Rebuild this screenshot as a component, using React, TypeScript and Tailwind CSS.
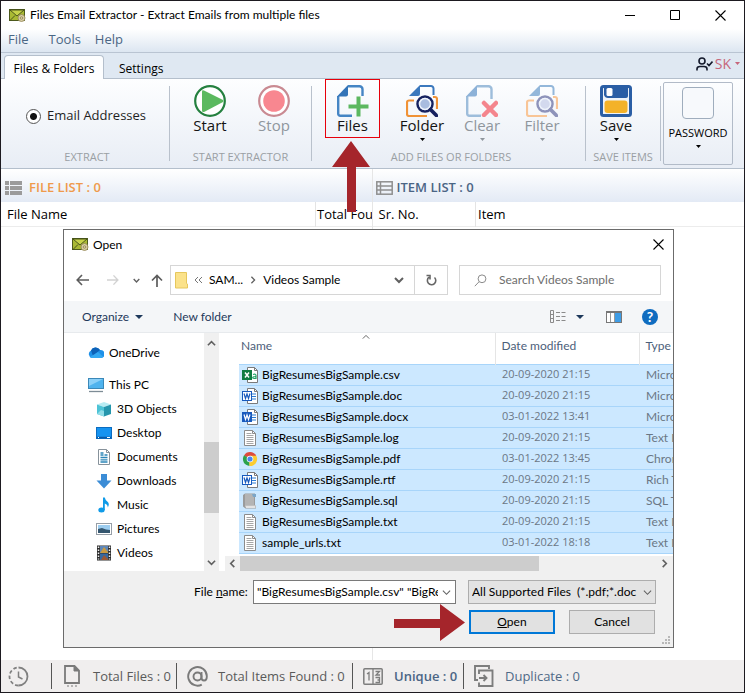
import React from "react";

const red = "#a5252b";

/* ---------- icons ---------- */

function MailIcon() {
  return (
    <svg width="17" height="13" viewBox="0 0 17 13" aria-hidden="true">
      <rect x="0.5" y="0.5" width="15" height="11" fill="#a9b933" stroke="#4d5a1c" />
      <path d="M1 1l7 6 7-6z" fill="#c6d24a" stroke="#3f4b18" strokeWidth="0.9" />
      <path d="M1 11.5l5-5M15 11l-5-4.500" stroke="#3f4b18" strokeWidth="0.9" />
      <circle cx="12.500" cy="9" r="3.500" fill="#d9cfa6" stroke="#8f8350" strokeWidth="0.8" />
      <circle cx="12.500" cy="9" r="1.300" fill="none" stroke="#8f8350" strokeWidth="0.8" />
    </svg>
  );
}

function StartIcon() {
  return (
    <svg width="32" height="32" viewBox="0 0 32 32" aria-hidden="true">
      <circle cx="16" cy="16" r="14.800" fill="#fff" stroke="#24803f" strokeWidth="2.200" />
      <path d="M8 6.500Q8 4.500 10 5.500L29 15Q30 16 29 17L11 26.500Q8 28 8 25.500z" fill="#5bb95f" />
    </svg>
  );
}

function StopIcon() {
  return (
    <svg width="32" height="32" viewBox="0 0 32 32" aria-hidden="true">
      <circle cx="16" cy="16" r="14.800" fill="#fff" stroke="#c98a92" strokeWidth="2.200" />
      <circle cx="16" cy="16" r="10.800" fill="#f88790" />
    </svg>
  );
}

function FilesIcon() {
  return (
    <svg width="32" height="32" viewBox="0 0 32 32" aria-hidden="true">
      <path d="M11 1.200h11.500a3 3 0 0 1 3 3V11M15 30.800H3.200a2 2 0 0 1-2-2V11" fill="none" stroke="#4585c4" strokeWidth="2.400" />
      <path d="M0 11.500L11 0v9.500a2 2 0 0 1-2 2z" fill="#3374b8" />
      <path d="M21.500 11.500v20M11.500 21.500h20" stroke="#5cb860" strokeWidth="4" />
    </svg>
  );
}

function FolderSearchIcon({ faded = false }: { faded?: boolean }) {
  const blue = faded ? "#93b7da" : "#3a78bd";
  const orange = faded ? "#f8c597" : "#f09236";
  const navy = faded ? "#8e93ba" : "#17225f";
  return (
    <svg width="32" height="32" viewBox="0 0 32 32" aria-hidden="true">
      <path d="M14 1h11a2.500 2.500 0 0 1 2.500 2.500V10" fill="none" stroke={blue} strokeWidth="2" />
      <path d="M3 11L14 0v9a2 2 0 0 1-2 2z" fill={blue} />
      <path d="M8 15.500H3a2 2 0 0 0-2 2V29a2 2 0 0 0 2 2h18M27 12h2a2 2 0 0 1 2 2v10" fill="none" stroke={orange} strokeWidth="2.200" />
      <circle cx="19" cy="19" r="7.500" fill={faded ? "#d3d9ee" : "#a9bcdf"} stroke={navy} strokeWidth="2.500" />
      <circle cx="19" cy="19" r="5.500" fill="none" stroke="#eef3fb" strokeWidth="1.500" />
      <path d="M24.500 24.500l6 6" stroke={navy} strokeWidth="3.800" strokeLinecap="round" />
    </svg>
  );
}

function ClearIcon() {
  return (
    <svg width="32" height="32" viewBox="0 0 32 32" aria-hidden="true">
      <path d="M11 1.200h11.500a3 3 0 0 1 3 3V14M15 30.800H3.200a2 2 0 0 1-2-2V11" fill="none" stroke="#9dbddb" strokeWidth="2.400" />
      <path d="M0 11.500L11 0v9.500a2 2 0 0 1-2 2z" fill="#8db2d8" />
      <path d="M18 18l12 12M30 18L18 30" stroke="#f4858d" strokeWidth="4.500" strokeLinecap="round" />
    </svg>
  );
}

function SaveIcon() {
  return (
    <svg width="32" height="32" viewBox="0 0 32 32" aria-hidden="true">
      <rect x="1.500" y="1.500" width="29" height="29" rx="2" fill="#eef3f8" stroke="#2a5ea5" strokeWidth="3" />
      <path d="M4 1h24v10q0 2-2 2H8q-3 0-4-3z" fill="#2a5ea5" />
      <rect x="6.500" y="3" width="6" height="8" rx="1.500" fill="#fff" />
      <rect x="4.500" y="15.500" width="23" height="12.500" rx="3" fill="#f3b229" />
    </svg>
  );
}

function UserIcon() {
  return (
    <svg width="17" height="14" viewBox="0 0 17 14" fill="none" stroke="#141a2c" strokeWidth="1.600" aria-hidden="true">
      <circle cx="6" cy="4" r="3" />
      <path d="M1 13.500V12q0-2.500 3-2.500h4q3 0 3 2.500v1.500M11 6.500l2 2 3.500-4" />
    </svg>
  );
}

function FileListIcon() {
  return (
    <svg width="17" height="14" viewBox="0 0 17 14" fill="#9b9b9b" aria-hidden="true">
      <path d="M0 0h4v4H0zM5 0h12v4H5zM0 5h4v4H0zM5 5h12v4H5zM0 10h4v4H0zM5 10h12v4H5z" />
    </svg>
  );
}

function ItemListIcon() {
  return (
    <svg width="17" height="14" viewBox="0 0 17 14" fill="none" stroke="#8f8f8f" strokeWidth="1.500" aria-hidden="true">
      <rect x="0.800" y="0.800" width="15.400" height="12.400" />
      <path d="M4.500 1v12M1 5h15M1 9h15" />
    </svg>
  );
}

function Chevron({ dir, size = 9, color = "#606060", width = 1.8 }: { dir: "up" | "down" | "left" | "right"; size?: number; color?: string; width?: number }) {
  const d = {
    up: "M1 7l4-4 4 4",
    down: "M1 3l4 4 4-4",
    left: "M7 1L3 5l4 4",
    right: "M3 1l4 4-4 4",
  }[dir];
  return (
    <svg width={size} height={size} viewBox="0 0 10 10" fill="none" stroke={color} strokeWidth={width} aria-hidden="true">
      <path d={d} />
    </svg>
  );
}

function Caret({ color = "#000", w = 5 }: { color?: string; w?: number }) {
  return (
    <svg width={w} height={Math.ceil(w / 2)} viewBox="0 0 8 4" preserveAspectRatio="none" aria-hidden="true">
      <path d="M0 0h8L4 4z" fill={color} />
    </svg>
  );
}

function CloseIcon({ size = 11 }: { size?: number }) {
  return (
    <svg width={size} height={size} viewBox="0 0 11 11" stroke="#000" strokeWidth="1.100" aria-hidden="true">
      <path d="M0.500 0.500l10 10M10.500 0.500l-10 10" />
    </svg>
  );
}

function PlaceIcon({ name }: { name: string }) {
  const art: Record<string, React.ReactNode> = {
    OneDrive: (
      <>
        <path d="M4 13a4 4 0 0 1-1-7.500A5 5 0 0 1 12 5a3.800 3.800 0 0 1 1 8z" fill="#1e90e8" />
        <path d="M3 5.500A5 5 0 0 1 12 5L5 11z" fill="#0d62b8" />
        <path d="M2 12l8-5 5 4.500Q14.500 13 13 13H4q-1.500 0-2-1z" fill="#33a8f2" />
      </>
    ),
    "This PC": (
      <>
        <rect x="0.500" y="1.500" width="15" height="10" fill="#4fb3ee" stroke="#3b88b8" />
        <path d="M1 2h14L1 9z" fill="#8bd0f8" />
        <path d="M1 14.500h14" stroke="#7d8c96" strokeWidth="1.300" />
      </>
    ),
    "3D Objects": (
      <>
        <path d="M1 3.500L8 1l7 2.500L8 6z" fill="#b8ecf3" />
        <path d="M1 3.500L8 6v9.500L1 13z" fill="#4dc3d6" />
        <path d="M15 3.500L8 6v9.500L15 13z" fill="#2596ad" />
        <path d="M1 13l4-4 3 1v5.500z" fill="#90dde8" />
      </>
    ),
    Desktop: (
      <>
        <rect x="0.500" y="2.500" width="15" height="11" fill="#1693f0" stroke="#0b6cc0" />
        <path d="M1 12.500h14" stroke="#0a58a6" strokeWidth="1.500" />
        <path d="M2 12.500h1M11 12.500h3" stroke="#fff" />
      </>
    ),
    Documents: (
      <>
        <path d="M2.500 0.500h8l3 3v12h-11z" fill="#fff" stroke="#87929b" />
        <path d="M10.500 0.500v3h3" fill="none" stroke="#87929b" />
        <path d="M4.500 4h3M4.500 6h3M4.500 8.500h7M4.500 10.800h7M4.500 13h7M8.500 6h3" stroke="#2c86b8" strokeWidth="1.300" />
      </>
    ),
    Downloads: <path d="M5 1h6v6.500h4.500L8 15.500 0.500 7.500H5z" fill="#3b8cd6" />,
    Music: (
      <>
        <ellipse cx="5.500" cy="13" rx="3.200" ry="2.500" fill="#109be8" />
        <path d="M7 0.500h1.800q0.500 3 3 4.500 2 2 0 5.500 0-3-3-4v6.500H7z" fill="#109be8" />
      </>
    ),
    Pictures: (
      <>
        <rect x="0.500" y="2.500" width="15" height="11" fill="#fff" stroke="#969ea6" />
        <rect x="2" y="4" width="12" height="8" fill="#9ccdf0" />
        <path d="M2 8l4-1 4 1.500 4 .5v3H2z" fill="#34566f" />
      </>
    ),
    Videos: (
      <>
        <rect x="1" y="0.500" width="14" height="15" fill="#2c2c2c" />
        <rect x="4" y="1" width="8" height="7" fill="#5d86b8" />
        <rect x="4" y="8.500" width="8" height="6.500" fill="#3668a0" />
        <path d="M4 8l4-6 4 5v1z" fill="#c89a42" />
        <path d="M5 15l3-5 4 4v1z" fill="#9a5633" />
        <path d="M2.500 1.500v13M13.500 1.500v13" stroke="#f1f1f1" strokeWidth="1.500" strokeDasharray="1.500 1.500" />
      </>
    ),
  };
  return (
    <svg width="16" height="16" viewBox="0 0 16 16" className="shrink-0" aria-hidden="true">
      {art[name]}
    </svg>
  );
}

type Kind = "csv" | "doc" | "docx" | "text" | "chrome" | "sql";

function FileIcon({ kind }: { kind: Kind }) {
  if (kind === "chrome") {
    return (
      <svg width="16" height="16" viewBox="0 0 16 16" aria-hidden="true">
        <path d="M8 8L2 4.500A7 7 0 0 1 14.200 4.800z" fill="#dd4b3e" />
        <path d="M8 8L2 4.300A7 7 0 0 0 7.500 15z" fill="#2ba24c" />
        <path d="M8 8h-1l.5 7A7 7 0 0 0 14.300 4.800H8z" fill="#fbcc30" />
        <circle cx="8" cy="8" r="3.300" fill="#fff" />
        <circle cx="8" cy="8" r="2.600" fill="#4a87ee" />
      </svg>
    );
  }
  if (kind === "sql") {
    return (
      <svg width="16" height="16" viewBox="0 0 16 16" aria-hidden="true">
        <path d="M1 2l2-1.500h10V12l1 1v2.500H3.500L1 13.500z" fill="#9b9b9b" />
        <path d="M3 1h9v11H3z" fill="#b4b4b4" />
        <path d="M3 12.500h10.500V15H4z" fill="#e3e3e3" />
        <path d="M10 1h4v3h-3z" fill="#7ba6c8" />
      </svg>
    );
  }
  if (kind === "text") {
    return (
      <svg width="16" height="16" viewBox="0 0 16 16" aria-hidden="true">
        <path d="M2.500 0.500h8l3 3v12h-11z" fill="#fff" stroke="#8b8b8b" />
        <path d="M10.500 0.500v3h3" fill="none" stroke="#8b8b8b" />
        <path d="M4.500 3.500h5M4.500 5.500h7M4.500 7.500h7M4.500 9.500h7M4.500 11.500h7M4.500 13.500h7" stroke="#9c9c9c" strokeWidth="0.900" />
      </svg>
    );
  }
  const main = kind === "csv" ? "#107c41" : "#185abd";
  const light = kind === "doc";
  return (
    <svg width="17" height="16" viewBox="0 0 17 16" aria-hidden="true">
      <path d="M5.500 0.500h7l3 3v12h-10z" fill="#fff" stroke="#7a7a7a" />
      <path d="M12.500 0.500v3h3" fill="none" stroke="#7a7a7a" />
      {kind === "csv" ? (
        <path d="M11 7.500q3-1 3 1v3h-2q-1.500 0-1.200-1.200.3-.8 3-.8" fill="none" stroke="#21a366" strokeWidth="1.200" />
      ) : (
        <path d="M10 6h4M10 8.500h4M10 11h4" stroke="#2b7cd3" strokeWidth="1.200" />
      )}
      <rect x="0.500" y="3.500" width="9" height="9" fill={light ? "#fff" : main} stroke={main} />
      {kind === "csv" ? (
        <path d="M3 5.500l4 5M7 5.500l-4 5" stroke="#fff" strokeWidth="1.500" />
      ) : (
        <path d="M2 5.500l1.500 5L5 6l1.500 4.500L8 5.500" fill="none" stroke={light ? main : "#fff"} strokeWidth="1.200" />
      )}
    </svg>
  );
}

/* ---------- data ---------- */

const places = ["3D Objects", "Desktop", "Documents", "Downloads", "Music", "Pictures", "Videos"];

const files: { name: string; date: string; type: string; kind: Kind }[] = [
  { name: "BigResumesBigSample.csv", date: "20-09-2020 21:15", type: "Microsoft", kind: "csv" },
  { name: "BigResumesBigSample.doc", date: "20-09-2020 21:15", type: "Microsoft", kind: "doc" },
  { name: "BigResumesBigSample.docx", date: "03-01-2022 13:41", type: "Microsoft", kind: "docx" },
  { name: "BigResumesBigSample.log", date: "20-09-2020 21:15", type: "Text Doc", kind: "text" },
  { name: "BigResumesBigSample.pdf", date: "03-01-2022 13:45", type: "Chrome", kind: "chrome" },
  { name: "BigResumesBigSample.rtf", date: "20-09-2020 21:15", type: "Rich Text", kind: "doc" },
  { name: "BigResumesBigSample.sql", date: "20-09-2020 21:15", type: "SQL Text", kind: "sql" },
  { name: "BigResumesBigSample.txt", date: "20-09-2020 21:15", type: "Text Doc", kind: "text" },
  { name: "sample_urls.txt", date: "03-01-2022 18:18", type: "Text Doc", kind: "text" },
];

/* ---------- ribbon ---------- */

function RibbonButton({ label, icon, caret, disabled }: { label: string; icon: React.ReactNode; caret?: boolean; disabled?: boolean }) {
  return (
    <button type="button" disabled={disabled} className="flex h-[62px] w-[60px] flex-col items-center text-[15px] text-[#141414] disabled:text-[#8f969d]">
      {icon}
      <span className="leading-[17px]">{label}</span>
      {caret && (
        <span className="pt-1">
          <Caret color={disabled ? "#8f969d" : "#000"} />
        </span>
      )}
    </button>
  );
}

function Group({ title, className, children }: { title: string; className: string; children: React.ReactNode }) {
  return (
    <section className={"flex flex-col " + className}>
      <div className="flex h-[70px] pt-1.5">{children}</div>
      <h2 className="whitespace-nowrap text-center text-[11px] leading-4 text-[#9a9fa4]">{title}</h2>
    </section>
  );
}

function Rule() {
  return <div className="my-[7px] w-px shrink-0 bg-[#b9c1cc]" />;
}

function Ribbon() {
  return (
    <div className="flex h-[91px] border-y border-[#b4bfcc] bg-linear-to-b from-[#fdfeff] to-[#e8edf5]">
      <Group title="EXTRACT" className="w-[168px] pl-1">
        <label className="flex w-full items-center justify-center gap-1.5 whitespace-nowrap pb-0.5 pr-0.5 text-[13px] text-[#1f1f1f]">
          <input
            type="radio"
            name="extract"
            defaultChecked
            className="size-[15px] appearance-none rounded-full border border-[#555] bg-white checked:bg-[radial-gradient(circle,#111_0_3px,#fff_4px)]"
          />
          Email Addresses
        </label>
      </Group>
      <Rule />
      <Group title="START EXTRACTOR" className="w-[141px] px-2">
        <div className="flex gap-1 pl-0.5">
          <RibbonButton label="Start" icon={<StartIcon />} />
          <RibbonButton label="Stop" icon={<StopIcon />} disabled />
        </div>
      </Group>
      <Rule />
      <Group title="ADD FILES OR FOLDERS" className="w-[273px] pl-[13px] pr-2">
        <div className="-mt-1.5 mr-3 flex h-[59px] w-[55px] shrink-0 justify-center border border-red-600 pt-[5px]">
          <RibbonButton label="Files" icon={<FilesIcon />} />
        </div>
        <RibbonButton label="Folder" icon={<FolderSearchIcon />} caret />
        <RibbonButton label="Clear" icon={<ClearIcon />} caret disabled />
        <RibbonButton label="Filter" icon={<FolderSearchIcon faded />} caret disabled />
      </Group>
      <Rule />
      <Group title="SAVE ITEMS" className="w-[74px]">
        <RibbonButton label="Save" icon={<SaveIcon />} caret />
      </Group>
      <Rule />
      <button type="button" className="my-[3px] ml-0.5 flex w-[70px] flex-col items-center rounded-xs border border-[#b2bbc8] pt-1 text-[11px] text-black">
        <span className="size-8 rounded-sm border border-[#9fadbd] bg-[#f7f9fc]" />
        <span className="pt-1.5 leading-4">PASSWORD</span>
        <span className="pt-1">
          <Caret />
        </span>
      </button>
    </div>
  );
}

/* ---------- dialog ---------- */

function OpenDialog() {
  return (
    <div role="dialog" aria-label="Open" className="absolute left-[62px] top-[228px] w-[611px] border border-[#6b6b6b] bg-white font-['Lato','Noto_Sans',sans-serif] text-xs text-black">
      <div className="flex h-[29px] items-center px-2">
        <MailIcon />
        <span className="pl-1">Open</span>
        <button type="button" aria-label="Close" className="ml-auto mr-px">
          <CloseIcon />
        </button>
      </div>

      <div className="flex h-[42px] items-center pl-3 pr-3">
        <button type="button" aria-label="Back">
          <svg width="13" height="12" viewBox="0 0 13 12" fill="none" stroke="#5c5c5c" strokeWidth="1.600"><path d="M13 6H1.500M6 1L1.200 6 6 11" /></svg>
        </button>
        <button type="button" aria-label="Forward" disabled className="ml-[18px]">
          <svg width="12" height="12" viewBox="0 0 13 12" fill="none" stroke="#d2d2d2" strokeWidth="1.500"><path d="M0 6h11.500M7 1l4.800 5L7 11" /></svg>
        </button>
        <button type="button" aria-label="Recent locations" className="ml-[14px]">
          <Chevron dir="down" size={7} width={2} />
        </button>
        <button type="button" aria-label="Up" className="ml-[11px]">
          <svg width="12" height="13" viewBox="0 0 12 13" fill="none" stroke="#5c5c5c" strokeWidth="1.700"><path d="M6 13V1.500M1 6.500l5-5 5 5" /></svg>
        </button>
        <div className="ml-[7px] flex h-[30px] w-[278px] items-center border border-[#d6d6d6]">
          <svg width="13" height="17" viewBox="0 0 13 17" className="ml-1" aria-hidden="true">
            <path d="M0.500 0.500h11v11l1 .500v4H.5z" fill="#fbe28a" stroke="#e6c75c" />
          </svg>
          <svg width="9" height="8" viewBox="0 0 9 8" className="ml-1.5" fill="none" stroke="#777" aria-hidden="true"><path d="M4 1L1 4l3 3M8 1L5 4l3 3" /></svg>
          <span className="ml-1.5">SAM...</span>
          <span className="ml-1.5"><Chevron dir="right" size={8} width={1.6} /></span>
          <span className="ml-1.5">Videos Sample</span>
          <button type="button" aria-label="Previous locations" className="ml-auto mr-[10px]">
            <Chevron dir="down" size={10} width={2} />
          </button>
          <button type="button" aria-label="Refresh" className="flex h-full w-[33px] items-center justify-center border-l border-[#d6d6d6]">
            <svg width="11" height="12" viewBox="0 0 11 12" fill="none" stroke="#666" strokeWidth="1.600"><path d="M8.500 3.500A4.200 4.200 0 1 1 3 3.200M0.500 1.500H4v4" /></svg>
          </button>
        </div>
        <label className="ml-[11px] flex h-[30px] flex-1 items-center border border-[#d6d6d6] pl-3.5">
          <svg width="13" height="13" viewBox="0 0 13 13" fill="none" stroke="#8b8b8b" className="shrink-0" aria-hidden="true"><circle cx="8" cy="4.800" r="3.900" /><path d="M5 7.800L0.800 12.200" /></svg>
          <input type="text" aria-label="Search Videos Sample" placeholder="Search Videos Sample" className="ml-3 w-full min-w-0 outline-none placeholder:text-[#6d6d6d]" />
        </label>
      </div>

      <div className="flex h-[32px] items-center border-b border-[#e7eaed] bg-[#f4f6f8] pl-[18px] pr-[17px] text-[#1e395b]">
        <button type="button" className="flex items-center gap-1.5">
          Organize <Caret color="#1e395b" w={8} />
        </button>
        <button type="button" className="ml-[30px]">New folder</button>
        <button type="button" aria-label="Change view" className="ml-auto">
          <svg width="16" height="13" viewBox="0 0 16 13" fill="none" stroke="#8a8a8a" aria-hidden="true">
            <path d="M.5.5h3v12h-3zM.5 4.500h3M.5 8.500h3" />
            <path d="M6 2.500h10M6 6.500h10M6 10.500h10" strokeDasharray="4 1.500" />
          </svg>
        </button>
        <button type="button" aria-label="View options" className="ml-[10px] mr-[22px]"><Caret color="#1e395b" w={8} /></button>
        <button type="button" aria-label="Preview pane">
          <svg width="16" height="12" viewBox="0 0 16 12" aria-hidden="true"><rect x=".5" y=".5" width="15" height="11" fill="#fff" stroke="#777" /><path d="M1 1.500h14" stroke="#777" /><path d="M9 2h6v9H9z" fill="#3f9de6" /><path d="M4.500 2v9M8.500 2v9" stroke="#999" /></svg>
        </button>
        <button type="button" aria-label="Help" className="-mr-0.5 ml-5 flex size-4 items-center justify-center rounded-full bg-[#0f6cc0] text-sm font-bold leading-4 text-white">?</button>
      </div>

      <div className="flex h-[238px]">
        <nav className="w-[140px] pt-2">
          <a href="#onedrive" className="flex h-6 items-center gap-[5px] pl-6"><PlaceIcon name="OneDrive" />OneDrive</a>
          <a href="#pc" className="mt-2 flex h-6 items-center gap-[5px] pl-6"><PlaceIcon name="This PC" />This PC</a>
          {places.map((p) => (
            <a key={p} href="#place" className="flex h-6 items-center gap-[5px] pl-8"><PlaceIcon name={p} />{p}</a>
          ))}
        </nav>
        <div className="flex w-[15px] flex-col items-center bg-[#f0f0f0]">
          <span className="flex h-5 items-center"><Chevron dir="up" /></span>
          <span className="mt-[89px] h-[71px] w-full bg-[#cdcdcd]" />
          <span className="mt-auto flex h-[18px] items-center"><Chevron dir="down" /></span>
        </div>
        <div className="ml-1.5 flex min-w-0 flex-1 flex-col">
          <div className="relative overflow-hidden pl-[14px]">
            <span className="absolute left-[137px] top-0 flex"><Chevron dir="up" size={8} width={1.2} /></span>
            <table className="w-[460px] table-fixed border-collapse text-left">
              <thead>
                <tr className="h-[31px] text-[#4c607a]">
                  <th className="w-[256px] pb-1 pl-0.5 font-normal">Name</th>
                  <th className="w-[144px] border-l border-[#e5e5e5] pb-1 pl-1.5 font-normal">Date modified</th>
                  <th className="border-l border-[#e5e5e5] pb-1 pl-1.5 font-normal">Type</th>
                </tr>
              </thead>
              <tbody className="bg-[#cce8ff]">
                {files.map((f) => (
                  <tr key={f.name} className="h-[21px] border-y border-[#a8d5fa] text-[#6b7785]">
                    <td className="p-0 text-black">
                      <span className="flex items-center pl-[3px]">
                        <span className="flex w-5"><FileIcon kind={f.kind} /></span>
                        {f.name}
                      </span>
                    </td>
                    <td className="py-0 pl-[7px] font-['Open_Sans','Noto_Sans',sans-serif] text-[11px]">{f.date}</td>
                    <td className="whitespace-nowrap py-0 pl-[7px]">{f.type}</td>
                  </tr>
                ))}
              </tbody>
            </table>
          </div>
          <div className="mt-auto flex h-[15px] items-center bg-[#f0f0f0]">
            <span className="flex w-[15px] justify-center"><Chevron dir="left" /></span>
            <span className="h-full w-[299px] bg-[#cdcdcd]" />
            <span className="ml-auto mr-1 flex"><Chevron dir="right" /></span>
          </div>
        </div>
      </div>

      <div className="relative bg-[#f0f0f0] pb-[13px] pl-[130px] pr-[17px] pt-[9px]">
        <div className="flex items-center">
          <label htmlFor="file-name" className="w-[59px] whitespace-nowrap">File <u>n</u>ame:</label>
          <div className="flex h-6 w-[203px] items-center border border-[#7a7a7a] bg-white">
            <input id="file-name" type="text" defaultValue={'"BigResumesBigSample.csv" "BigResumesBigSample.doc"'} className="ml-[3px] min-w-0 flex-1 outline-none" />
            <button type="button" aria-label="Show file names" className="px-1"><Chevron dir="down" width={1.2} /></button>
          </div>
          <div className="relative ml-3 h-6 flex-1">
            <select aria-label="File type" className="h-full w-full appearance-none border border-[#adadad] bg-[#e3e3e3] pl-[3px] pr-4">
              <option>{"All Supported Files\u00a0 (*.pdf;*.doc"}</option>
            </select>
            <span className="pointer-events-none absolute right-1 top-2"><Chevron dir="down" width={1.2} /></span>
          </div>
        </div>
        <div className="mt-1.5 flex justify-end gap-3.5 pr-px">
          <button type="button" className="h-6 w-[86px] border-2 border-[#0078d7] bg-[#e1e1e1]"><u>O</u>pen</button>
          <button type="button" className="h-6 w-[86px] border border-[#adadad] bg-[#e1e1e1]">Cancel</button>
        </div>
        <svg width="9" height="9" viewBox="0 0 9 9" className="absolute bottom-0.5 right-0.5" fill="#b8b8b8" aria-hidden="true">
          <path d="M6 0h2v2H6zM3 3h2v2H3zM6 3h2v2H6zM0 6h2v2H0zM3 6h2v2H3zM6 6h2v2H6z" />
        </svg>
      </div>
    </div>
  );
}

/* ---------- status bar ---------- */

function StatusBar() {
  return (
    <footer className="flex h-8 items-center bg-[#f0eeee] text-[13px] text-[#5a5a5a]">
      <div className="flex w-[50px] pl-[7px]">
        <svg width="21" height="21" viewBox="0 0 21 21" fill="none" stroke="#808080" strokeWidth="1.800" aria-hidden="true">
          <path d="M10.500 1.500a9 9 0 0 1 0 18" />
          <path d="M10.500 19.500a9 9 0 0 1 0-18" strokeDasharray="3.500 2.200" />
          <path d="M10.500 5.500v5.500l4 2" strokeWidth="1.500" />
        </svg>
      </div>
      <div className="flex h-[26px] w-[125px] items-center whitespace-nowrap border-l border-[#555] pl-3">
        <svg width="16" height="22" viewBox="0 0 16 22" fill="none" stroke="#7a7a7a" strokeWidth="1.800" aria-hidden="true">
          <path d="M1 1h9.500L15 5.500V18H1z" /><path d="M10 1v5h5z" fill="#7a7a7a" strokeWidth="1" /><path d="M3 21h10" strokeDasharray="2 2" strokeWidth="1.200" />
        </svg>
        <span className="ml-[13px] pt-0.5">Total Files : 0</span>
      </div>
      <div className="flex h-[26px] w-[176px] items-center whitespace-nowrap border-l border-[#555] pl-2.5">
        <svg width="21" height="21" viewBox="0 0 21 21" fill="none" stroke="#7a7a7a" strokeWidth="1.900" aria-hidden="true">
          <circle cx="10.500" cy="10.500" r="4" /><path d="M14.500 6v5.500q0 3 2.500 3 3 0 2.800-4.500a9.300 9.300 0 1 0-5 8.600" />
        </svg>
        <span className="ml-2.5 pt-0.5">Total Items Found : 0</span>
      </div>
      <div className="flex h-[26px] w-[111px] items-center whitespace-nowrap border-l border-[#555] pl-2.5 font-semibold text-[#4b6585]">
        <svg width="20" height="17" viewBox="0 0 20 17" fill="none" stroke="#7d7d7d" strokeWidth="1.500" aria-hidden="true">
          <rect x=".8" y=".8" width="18.400" height="15.400" rx="1" /><path d="M10 1v15M4 6l2-1.500V12.500M12.500 3.500h4l-3.500 3.500h4M12.500 9.500h4v2.500h-2 2v2.500h-4" strokeWidth="1.300" />
        </svg>
        <span className="ml-[11px] pt-0.5">Unique : 0</span>
      </div>
      <div className="flex h-[26px] items-center whitespace-nowrap border-l border-[#555] pl-2.5 text-[#4f6986]">
        <svg width="20" height="22" viewBox="0 0 20 22" fill="none" stroke="#7d7d7d" strokeWidth="1.900" aria-hidden="true">
          <path d="M4 15H1V1h14v3" /><path d="M5 9V5.500h13.500V21H5v-3.500M5 13h7M9.500 10l3 3-3 3" />
        </svg>
        <span className="ml-[11px] pt-0.5">Duplicate : 0</span>
      </div>
    </footer>
  );
}

/* ---------- window ---------- */

export default function App() {
  return (
    <div className="relative flex min-h-screen flex-col overflow-hidden border border-[#1d1a20] bg-white font-['Open_Sans','Noto_Sans',sans-serif] text-xs text-black">
      <header className="flex h-7 items-center pl-2">
        <MailIcon />
        <h1 className="pl-1 font-['Lato','Noto_Sans',sans-serif]">Files Email Extractor - Extract Emails from multiple files</h1>
        <div className="ml-auto flex items-center gap-[35px] pr-[18px]">
          <button type="button" aria-label="Minimize" className="flex"><svg width="10" height="11" viewBox="0 0 10 11"><path d="M0 5.500h10" stroke="#000" /></svg></button>
          <button type="button" aria-label="Maximize" className="flex"><svg width="10" height="10" viewBox="0 0 10 10"><path d="M.5.5h9v9h-9z" fill="none" stroke="#000" /></svg></button>
          <button type="button" aria-label="Close" className="flex"><CloseIcon /></button>
        </div>
      </header>

      <nav className="flex h-[23px] items-center gap-5 bg-linear-to-b from-white to-[#dce6f1] pb-px pl-[7px] text-[13px] text-[#4a6684]">
        <button type="button">File</button>
        <button type="button">Tools</button>
        <button type="button" className="-ml-1.5">Help</button>
      </nav>

      <div className="flex h-[26px] items-end border-t border-[#b9c4d2] bg-[#dfe8f2] pl-[3px]">
        <button type="button" className="relative -mb-px h-6 w-[100px] rounded-t-sm border border-b-0 border-[#b4bfcc] bg-[#fdfeff] pt-0.5">Files &amp; Folders</button>
        <button type="button" className="ml-[15px] h-[22px] pt-1">Settings</button>
        <button type="button" className="ml-auto mr-1 flex h-full items-center gap-0.5 pb-1 text-sm text-[#c6657a]">
          <UserIcon /> SK <span className="ml-0.5"><Caret color="#c6657a" /></span>
        </button>
      </div>

      <Ribbon />

      <main className="grid flex-1 grid-cols-2">
        <section className="flex flex-col border-r border-[#e6e6e6]">
          <h2 className="flex h-[33px] items-center gap-[7px] bg-linear-to-b from-white to-[#e3eaf5] pl-1 pt-1 text-[13px] font-semibold text-[#ef9a4c]">
            <FileListIcon /> FILE LIST : 0
          </h2>
          <table className="w-full table-fixed border-b border-[#ececec] text-left text-[13px]">
            <thead>
              <tr className="h-6">
                <th className="pb-0 pl-1.5 pr-0 pt-0.5 font-normal">File Name</th>
                <th className="w-[56px] overflow-hidden whitespace-nowrap border-l border-[#e4e4e4] pb-0 pl-px pr-0 pt-0.5 font-normal">Total Found</th>
              </tr>
            </thead>
          </table>
        </section>
        <section className="flex flex-col">
          <h2 className="flex h-[33px] items-center gap-1 bg-linear-to-b from-white to-[#e3eaf5] pl-[3px] pt-1 text-[13px] font-semibold text-[#4b6585]">
            <ItemListIcon /> ITEM LIST : 0
          </h2>
          <table className="w-full table-fixed border-b border-[#ececec] text-left text-[13px]">
            <thead>
              <tr className="h-6">
                <th className="w-[103px] pb-0 pl-1.5 pr-0 pt-0.5 font-normal">Sr. No.</th>
                <th className="border-l border-[#e4e4e4] pb-0 pl-0.5 pr-0 pt-0.5 font-normal">Item</th>
              </tr>
            </thead>
          </table>
        </section>
      </main>

      <StatusBar />
      <OpenDialog />

      <svg width="38" height="71" viewBox="0 0 38 71" className="pointer-events-none absolute left-[331px] top-[140px]" fill={red} aria-hidden="true">
        <path d="M19 0l19 26H24v45h-9V26H0z" />
      </svg>
      <svg width="71" height="38" viewBox="0 0 71 38" className="pointer-events-none absolute left-[393px] top-[603px]" fill={red} aria-hidden="true">
        <path d="M71 18.500L46 37V24H0v-9h46V0z" />
      </svg>
    </div>
  );
}
